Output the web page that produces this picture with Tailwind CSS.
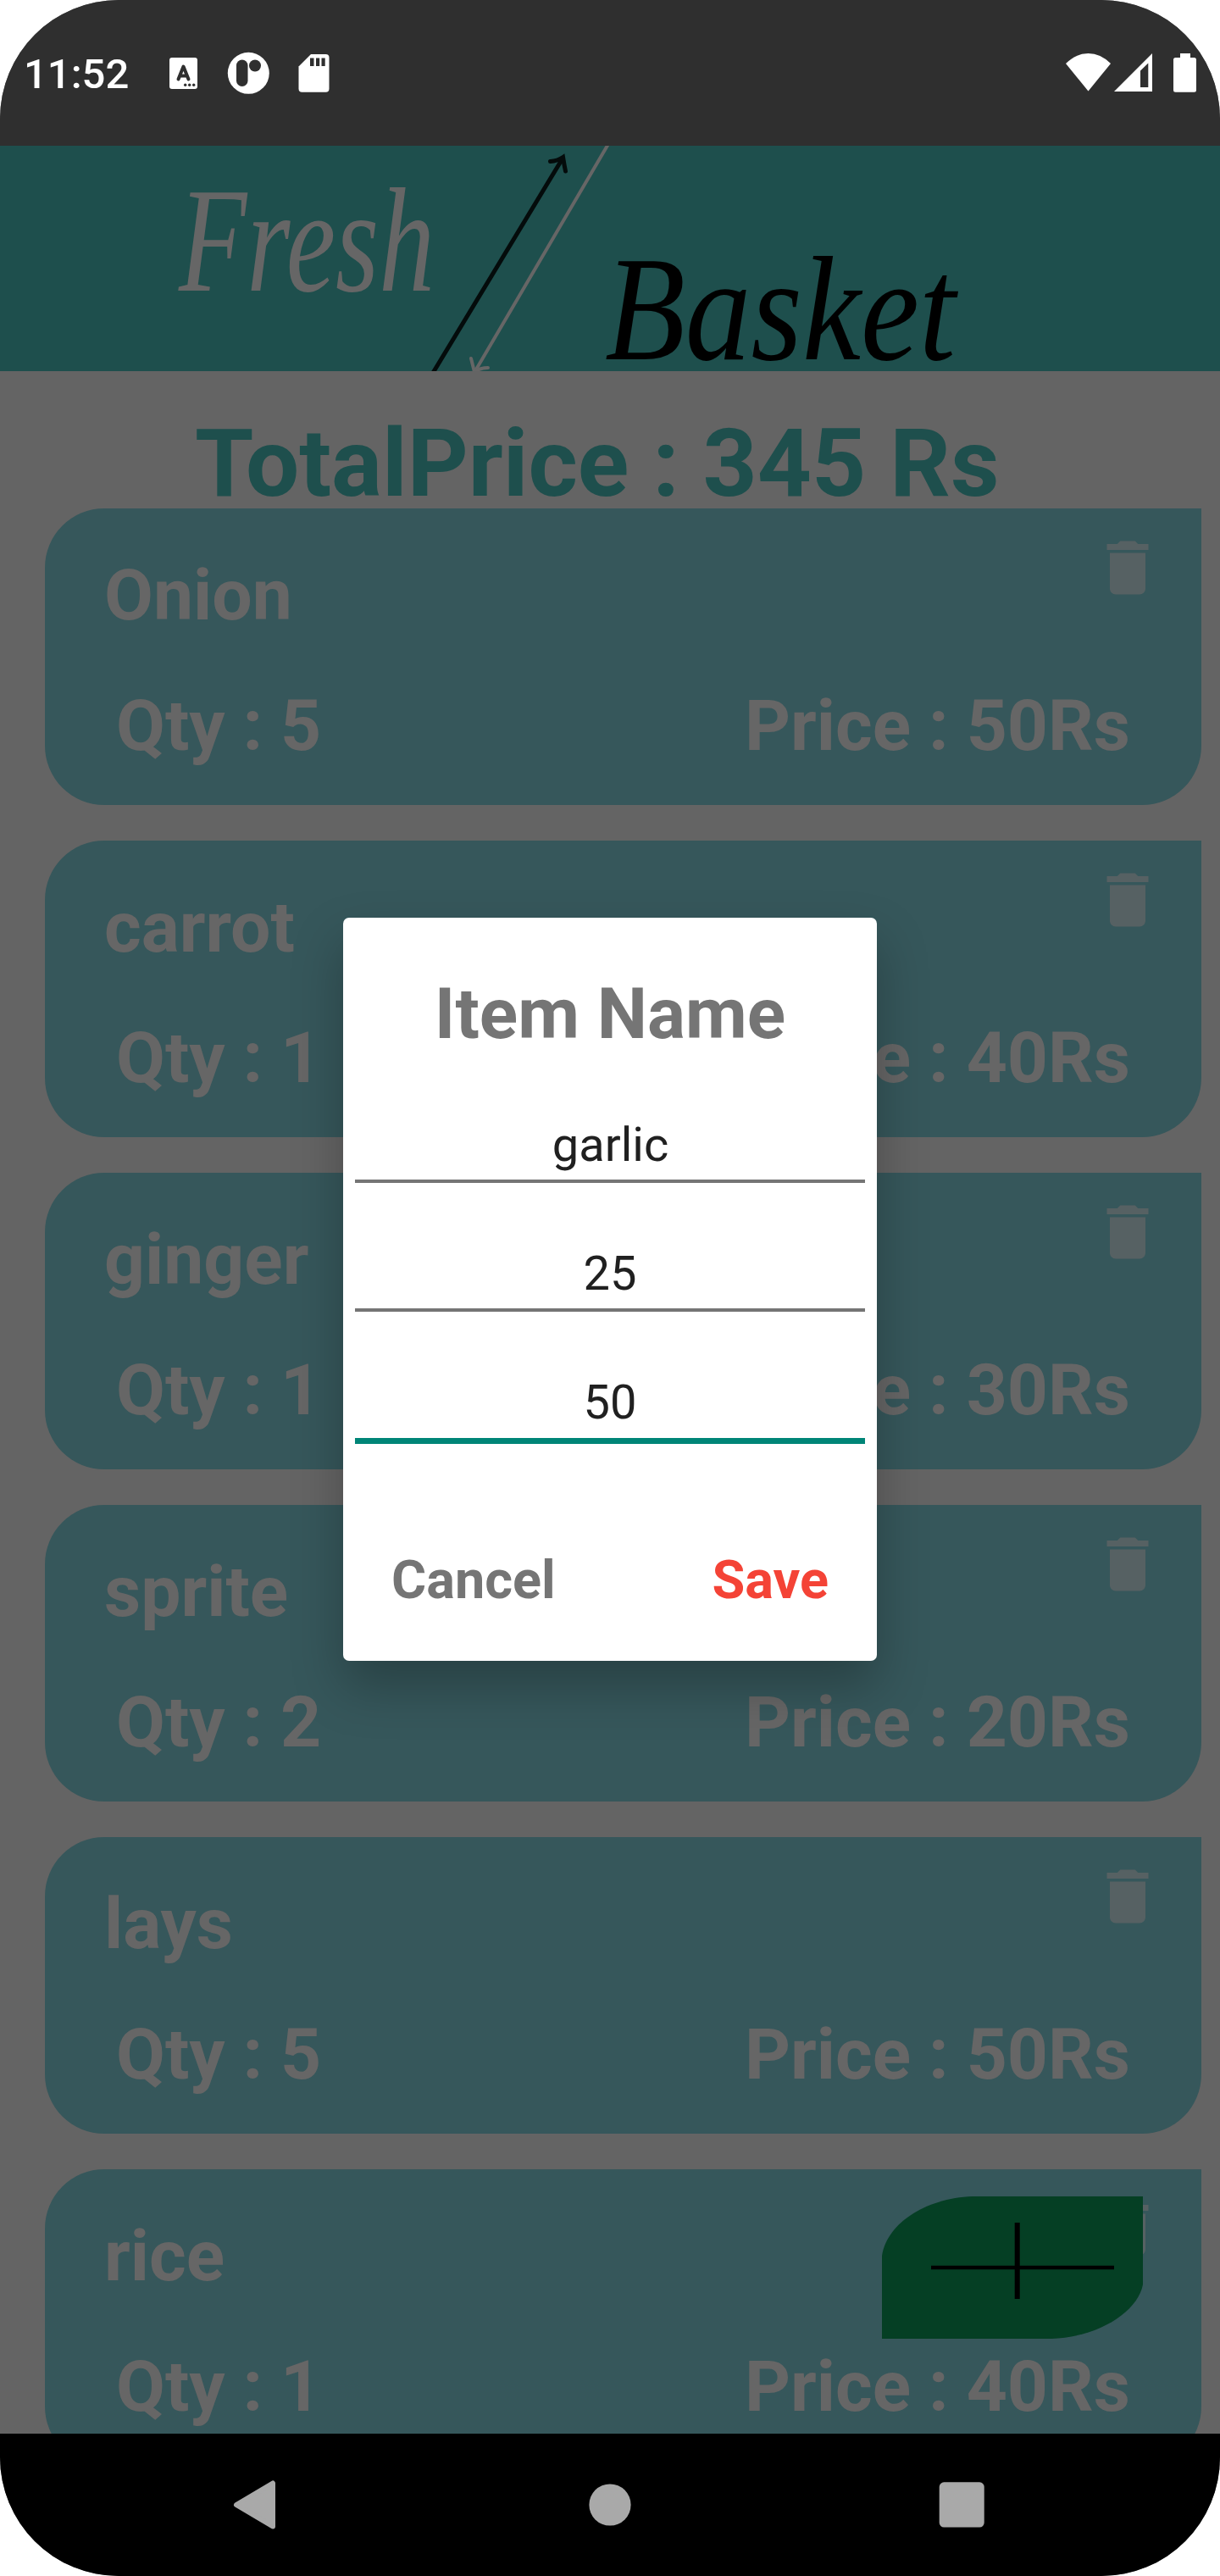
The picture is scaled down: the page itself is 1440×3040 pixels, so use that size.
<!DOCTYPE html>
<html lang="en">
<head>
<meta charset="utf-8">
<title>Fresh Basket</title>
<script src="https://cdn.jsdelivr.net/npm/@tailwindcss/browser@4"></script>
</head>
<body class="bg-white">
<div class="relative flex h-[3040px] w-[1440px] flex-col overflow-hidden rounded-[140px] bg-[#646464] font-[Roboto,sans-serif]">

  <!-- Status bar -->
  <header class="flex h-[172px] shrink-0 items-center justify-between bg-[#2f2f2f] pl-[28px] text-white">
    <div class="flex items-center">
      <span id="clock" class="w-[172px] pt-[3px] text-[49px] leading-[58px] font-medium">11:52</span>
      <svg class="h-[60px] w-[190px]" viewBox="200 56 190 60" fill="#fff">
        <rect x="200" y="68" width="33" height="37" rx="3"/>
        <path d="M210.500 93.500 L216.500 78.500 L222.500 93.500 M212.500 89.500 H220.500" fill="none" stroke="#2f2f2f" stroke-width="4" stroke-linecap="round" stroke-linejoin="round"/>
        <g fill="#2f2f2f"><circle cx="218.700" cy="100.300" r="1.700"/><circle cx="223.700" cy="100.300" r="1.700"/><circle cx="228.700" cy="100.300" r="1.700"/></g>
        <circle cx="293.300" cy="86.300" r="24.500"/>
        <rect x="279" y="70.500" width="13.500" height="31.500" rx="6.750" fill="#2f2f2f"/>
        <circle cx="301" cy="77.500" r="7" fill="#2f2f2f"/>
        <path d="M367 64h17.500a4 4 0 0 1 4 4v36.700a4 4 0 0 1-4 4h-28a4 4 0 0 1-4-4V78.500z"/>
        <path d="M366 68.500h4.500v9.500H366zM373 68.500h4.200v9.500H373zM379.500 68.500h4.200v9.500h-4.200z" fill="#2f2f2f"/>
      </svg>
    </div>
    <svg class="h-[60px] w-[190px]" viewBox="1250 56 190 60" fill="#fff">
      <path d="M1284.500 107.500 L1258 75 Q1270 63 1284.500 63 T1311 75z"/>
      <path fill-rule="evenodd" d="M1315 108 L1360 63 V108zM1346 83.500V103h9.300V74.500z"/>
      <path d="M1393 63h12v5h4.500a2.500 2.500 0 0 1 2.500 2.500v35.700a2.500 2.500 0 0 1-2.500 2.500h-22a2.500 2.500 0 0 1-2.500-2.500V70.500a2.500 2.500 0 0 1 2.500-2.500h5.500z"/>
    </svg>
  </header>

  <!-- Brand banner -->
  <svg class="h-[266px] w-[1440px] shrink-0 bg-[#1e4f4d]" viewBox="0 172 1440 266" font-family="'Liberation Serif',serif" font-style="italic">
    <text x="211" y="343" font-size="176" fill="#666" textLength="302" lengthAdjust="spacingAndGlyphs">Fresh</text>
    <text x="714" y="424" font-size="176" fill="#000" textLength="414" lengthAdjust="spacingAndGlyphs">Basket</text>
    <g fill="none" stroke-linecap="round">
      <path d="M511 440 L664 187" stroke="#040b0b" stroke-width="5"/>
      <path d="M649.500 190.500 Q658 190 664.500 185.500 Q666 195 667.500 202" stroke="#040b0b" stroke-width="5"/>
      <path d="M718 170 L562 436" stroke="#666" stroke-width="4"/>
      <path d="M556 423 Q558 431 560 439 Q567 434 576 434" stroke="#666" stroke-width="4"/>
    </g>
  </svg>

  <div class="h-[162px] shrink-0 pt-[43px] pl-[230px]">
    <h1 class="w-max text-[112px] leading-[132px] font-bold whitespace-nowrap text-[#1e4f4d]">TotalPrice : 345 Rs</h1>
  </div>

  <!-- Basket items -->
  <main id="items" class="flex h-[2272px] flex-col gap-[42px] overflow-hidden pl-[53px] pr-[22px] text-[84px] leading-[98px] font-bold text-[#666]">
  </main>

  <template id="card">
    <article class="flex h-[350px] shrink-0 flex-col rounded-[70px] rounded-tr-none bg-[#36575b] pt-[54px]">
      <div class="flex h-[154px] items-start justify-between pr-[45px] pl-[70px]">
        <span></span>
        <svg class="-mt-[26px] size-[84px]" viewBox="0 0 24 24" fill="#566163"><path d="M6 19c0 1.100.9 2 2 2h8c1.100 0 2-.9 2-2V7H6v12zM19 4h-3.500l-1-1h-5l-1 1H5v2h14V4z"/></svg>
      </div>
      <div class="flex justify-between px-[84px]"><span></span><span></span></div>
    </article>
  </template>

  <!-- Navigation bar -->
  <nav class="relative z-10 h-[168px] shrink-0 bg-black">
    <svg class="h-[168px] w-[1440px]" viewBox="0 2872 1440 168" fill="#a9a9a9">
      <path d="M279 2956 L322 2930.500 V2981.500z" stroke="#a9a9a9" stroke-width="6" stroke-linejoin="round"/>
      <circle cx="720" cy="2956" r="24.600"/>
      <rect x="1108.700" y="2929.300" width="53" height="53.300" rx="5.500"/>
    </svg>
  </nav>

  <!-- Add button -->
  <button class="absolute top-[2592px] left-[1041px] h-[168px] w-[308px]" aria-label="Add item">
    <svg class="h-[168px] w-[308px]" viewBox="0 0 308 168">
      <path d="M0 168V70C6 30 56 0 112 0H308V104C302 136 256 166 200 168z" fill="#053f24"/>
      <path d="M58 84H274" stroke="#000" stroke-width="4.500"/>
      <path d="M159.700 31V121" stroke="#000" stroke-width="6"/>
    </svg>
  </button>

  <!-- Edit dialog -->
  <section class="absolute top-[1083px] left-[405px] z-20 flex h-[877px] w-[630px] flex-col rounded-[7px] bg-white px-[14px] pt-[65px] text-center shadow-[0_30px_60px_rgba(0,0,0,0.26)]">
    <h2 class="text-[84px] leading-[98px] font-bold text-[#757575]">Item Name</h2>
    <div class="mt-[72px] flex flex-col text-[56px] leading-[66px] text-[#202020]">
      <div class="h-[78px] border-b-4 border-[#757575] pl-px">garlic</div>
      <div class="mt-[74px] h-[78px] border-b-4 border-[#757575]">25</div>
      <div class="mt-[74px] h-[82px] border-b-[7px] border-[#008577]">50</div>
    </div>
    <div class="mt-[124px] flex justify-between pr-[43px] pl-[43px] text-[63px] leading-[74px] font-bold">
      <span class="text-[#757575]">Cancel</span><span class="text-[#f44336]">Save</span>
    </div>
  </section>
</div>
<script>
const items = [["Onion",5,50],["carrot",1,40],["ginger",1,30],["sprite",2,20],["lays",5,50],["rice",1,40]];
const list = document.getElementById("items"), tpl = document.getElementById("card");
for (const [name, qty, price] of items) {
  const node = tpl.content.cloneNode(true), s = node.querySelectorAll("span");
  s[0].textContent = name;
  s[1].textContent = "Qty : " + qty;
  s[2].textContent = "Price : " + price + "Rs";
  list.append(node);
}
</script>
</body>
</html>
